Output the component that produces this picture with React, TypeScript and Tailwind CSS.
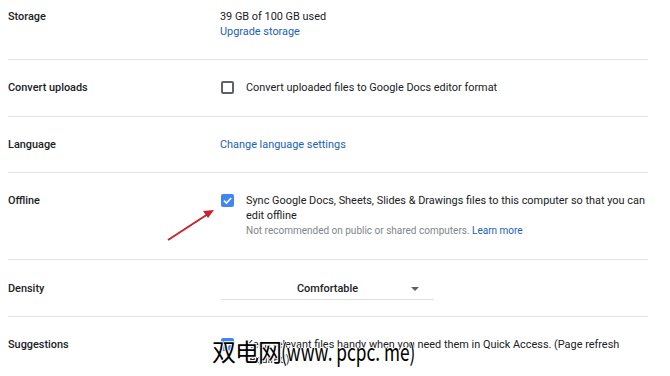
import React from "react";

function Box({ checked }: { checked?: boolean }) {
  if (checked) {
    return (
      <div className="w-[13px] h-[13px] rounded-[2px] bg-[#4285f4] flex items-center justify-center">
        <svg width="11" height="11" viewBox="0 0 11 11">
          <path d="M2 5.6 L4.4 8 L9.2 3" fill="none" stroke="#fff" strokeWidth="1.6" />
        </svg>
      </div>
    );
  }
  return <div className="w-[13px] h-[13px] rounded-[2px] border-2 border-[#5f6368]" />;
}

function Row({
  label,
  children,
  cls,
}: {
  label: string;
  children: React.ReactNode;
  cls: string;
}) {
  return (
    <div className={`flex ${cls}`}>
      <div className="w-[212px] shrink-0 font-medium text-[#202124]">{label}</div>
      <div className="flex-1">{children}</div>
    </div>
  );
}

export default function App() {
  return (
    <div
      className="relative w-[670px] h-[376px] overflow-hidden bg-white text-[10.9px] leading-[15px] text-[#202124]"
      style={{ fontFamily: "Roboto, 'Noto Sans', sans-serif" }}
    >
      <div className="pl-[8px] w-[648px]">
        <Row label="Storage" cls="pt-[9px] pb-[20px] border-b border-[#e3e3e3]">
          <div>39 GB of 100 GB used</div>
          <div className="text-[#1a62b4]">Upgrade storage</div>
        </Row>
        <Row label="Convert uploads" cls="pt-[20px] pb-[21px] border-b border-[#e3e3e3]">
          <div className="flex">
            <div className="w-[26px] pl-[1px] pt-[1px]">
              <Box />
            </div>
            <div>Convert uploaded files to Google Docs editor format</div>
          </div>
        </Row>
        <Row label="Language" cls="pt-[20px] pb-[20px] border-b border-[#e3e3e3]">
          <div className="text-[#1a62b4]">Change language settings</div>
        </Row>
        <Row label="Offline" cls="pt-[20px] pb-[21px] border-b border-[#e3e3e3]">
          <div className="flex">
            <div className="w-[26px] pl-[1px] pt-[1px] shrink-0">
              <Box checked />
            </div>
            <div className="-mr-[8px]">
              <div>Sync Google Docs, Sheets, Slides &amp; Drawings files to this computer so that you can edit offline</div>
              <div className="text-[10px] text-[#80868b]">
                Not recommended on public or shared computers. <span className="text-[#1a62b4]">Learn more</span>
              </div>
            </div>
          </div>
        </Row>
        <Row label="Density" cls="pt-[21px] pb-[16px] border-b border-[#e3e3e3]">
          <div className="relative w-[213px] h-[19px] ml-[1px] border-b border-[#e0e0e0] text-center font-medium">
            <span>Comfortable</span>
            <svg className="absolute right-[15px] top-[6px]" width="8" height="4" viewBox="0 0 8 4">
              <path d="M0 0 L8 0 L4 4 Z" fill="#5f6368" />
            </svg>
          </div>
        </Row>
        <Row label="Suggestions" cls="pt-[20px] pb-[20px]">
          <div className="flex">
            <div className="w-[26px] pl-[1px] pt-[1px] shrink-0">
              <Box checked />
            </div>
            <div className="pr-[22px]">
              Keep relevant files handy when you need them in Quick Access. (Page refresh required)
            </div>
          </div>
        </Row>
      </div>

      <svg className="absolute left-0 top-0 pointer-events-none" width="670" height="376">
        <line x1="168" y1="240" x2="208" y2="214" stroke="#c8232b" strokeWidth="2" />
        <path d="M214 210 L203 211 L208 218 Z" fill="#c8232b" />
      </svg>

      <div
        className="absolute left-[212px] top-[336px] text-[24px] leading-[30px] text-black whitespace-nowrap"
        style={{
          fontFamily: "'Noto Sans CJK SC', sans-serif",
          textShadow: "1px 0 #fff, -1px 0 #fff, 0 1px #fff, 0 -1px #fff",
        }}
      >
        <span className="inline-block tracking-[-1px]">双电网</span>
        <span className="inline-block origin-left scale-x-[0.72]">(www. pcpc. me)</span>
      </div>
    </div>
  );
}
